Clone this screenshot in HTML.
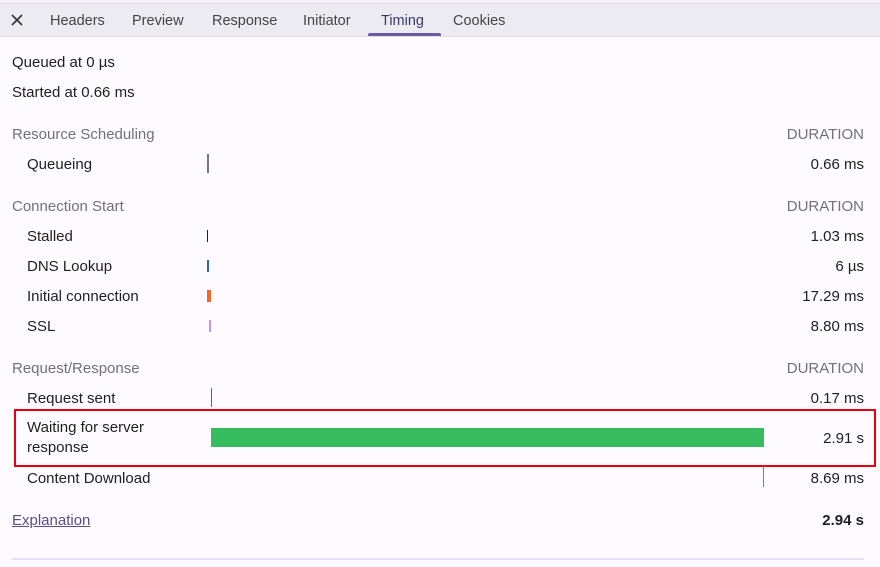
<!DOCTYPE html>
<html><head><style>
body{margin:0;width:880px;height:567px;background:#fdfbff;font-family:"Liberation Sans",sans-serif;font-size:15px;color:#1f1f1f;position:relative;overflow:hidden}
.a{position:absolute;white-space:nowrap;line-height:20px}
.g{color:#747078}
.r{right:16px;text-align:right}
.tab{top:11px;color:#444;font-size:14.5px}
.bar{position:absolute}
</style></head><body>
<div class="a" style="left:0;top:0;width:880px;height:3px;background:#f4f2f8;border-bottom:1px solid #e4def0"></div>
<div class="a" style="left:0;top:4px;width:880px;height:32px;background:#ecebf2;border-bottom:1px solid #e0dce8"></div>
<svg class="a" style="left:10px;top:13px" width="14" height="14"><path d="M2 2L12 12M12 2L2 12" stroke="#333" stroke-width="1.6"/></svg>
<div class="a tab" style="left:50px">Headers</div>
<div class="a tab" style="left:132px">Preview</div>
<div class="a tab" style="left:212px">Response</div>
<div class="a tab" style="left:303px">Initiator</div>
<div class="a tab" style="left:381px;color:#3a3a6a">Timing</div>
<div class="a" style="left:368px;top:33px;width:73px;height:3px;background:#6a5a9f;border-radius:2px 2px 0 0"></div>
<div class="a tab" style="left:453px">Cookies</div>

<div class="a" style="left:12px;top:53px">Queued at 0 µs</div>
<div class="a" style="left:12px;top:83px">Started at 0.66 ms</div>

<div class="a g" style="left:12px;top:125px">Resource Scheduling</div><div class="a g r" style="top:125px">DURATION</div>
<div class="a" style="left:27px;top:155px">Queueing</div><div class="bar" style="left:207px;top:154px;width:2px;height:19px;background:#7a7580"></div><div class="a r" style="top:155px">0.66 ms</div>

<div class="a g" style="left:12px;top:197px">Connection Start</div><div class="a g r" style="top:197px">DURATION</div>
<div class="a" style="left:27px;top:227px">Stalled</div><div class="bar" style="left:207px;top:230px;width:1px;height:12px;background:#222"></div><div class="a r" style="top:227px">1.03 ms</div>
<div class="a" style="left:27px;top:257px">DNS Lookup</div><div class="bar" style="left:207px;top:260px;width:2px;height:12px;background:#3a60b0"></div><div class="a r" style="top:257px">6 µs</div>
<div class="a" style="left:27px;top:287px">Initial connection</div><div class="bar" style="left:207px;top:290px;width:4px;height:12px;background:#f0672a"></div><div class="a r" style="top:287px">17.29 ms</div>
<div class="a" style="left:27px;top:317px">SSL</div><div class="bar" style="left:209px;top:320px;width:2px;height:12px;background:#c890ff"></div><div class="a r" style="top:317px">8.80 ms</div>

<div class="a g" style="left:12px;top:359px">Request/Response</div><div class="a g r" style="top:359px">DURATION</div>
<div class="a" style="left:27px;top:389px">Request sent</div><div class="bar" style="left:211px;top:388px;width:1px;height:19px;background:#3a70a0"></div><div class="a r" style="top:389px">0.17 ms</div>
<div class="a" style="left:14px;top:409px;width:858px;height:54px;border:2px solid #e8000f"></div>
<div class="a" style="left:27px;top:418px;line-height:20px">Waiting for server<br>response</div>
<div class="bar" style="left:211px;top:428px;width:553px;height:19px;background:#37bb5f"></div>
<div class="a r" style="top:429px">2.91 s</div>
<div class="a" style="left:27px;top:469px">Content Download</div><div class="bar" style="left:763px;top:466px;width:1px;height:21px;background:#5a8ab0"></div><div class="a r" style="top:469px">8.69 ms</div>

<div class="a" style="left:12px;top:511px;color:#5a4e8a;text-decoration:underline">Explanation</div>
<div class="a r" style="top:511px;font-weight:bold">2.94 s</div>
<div class="a" style="left:12px;top:558px;width:852px;height:2px;background:#e6def5"></div>
</body></html>
